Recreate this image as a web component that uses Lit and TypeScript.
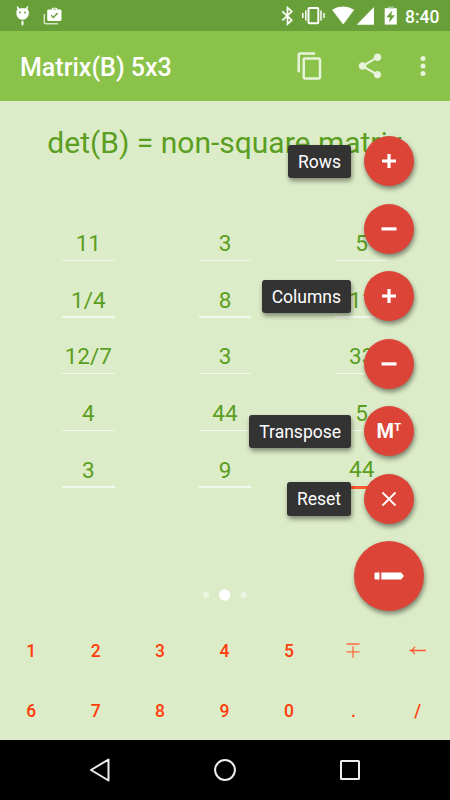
import { LitElement, html, css, svg } from "lit";
import { customElement } from "lit/decorators.js";
import { classMap } from "lit/directives/class-map.js";

const MATRIX = [
  ["11", "3", "5"],
  ["1/4", "8", "11"],
  ["12/7", "3", "33"],
  ["4", "44", "5"],
  ["3", "9", "44"],
];

const KEYS = ["1", "2", "3", "4", "5", "∓", "←", "6", "7", "8", "9", "0", ".", "/"];

const plus = html`<svg width="14" height="14" viewBox="0 0 14 14"><path fill="#fff" d="M5.400 0h3.200v5.400H14v3H8.600V14H5.400V8.400H0v-3h5.400z"/></svg>`;
const minus = html`<svg width="16" height="4" viewBox="0 0 16 4"><path fill="#fff" d="M.5.300h15v3.200H.5z"/></svg>`;
const cross = html`<svg width="16" height="16" viewBox="0 0 16 16"><path stroke="#fff" stroke-width="1.800" d="M1.500 1.500l13 13M14.500 1.500l-13 13"/></svg>`;
const transpose = html`<span class="mt">M<span class="t">T</span></span>`;

const ACTIONS = [
  { label: "Rows", icon: plus },
  { label: "", icon: minus },
  { label: "Columns", icon: plus },
  { label: "", icon: minus },
  { label: "Transpose", icon: transpose },
  { label: "Reset", icon: cross },
];

@customElement("app-root")
export class AppRoot extends LitElement {
  static styles = css`
    :host {
      display: flex;
      flex-direction: column;
      position: relative;
      width: 450px;
      height: 800px;
      overflow: hidden;
      background: #ddecc8;
      font-family: Roboto, "Noto Sans", sans-serif;
    }
    svg { display: block; flex: none; }
    .status {
      height: 31px;
      flex: none;
      background: #689f38;
    }
    .bar {
      height: 70px;
      flex: none;
      display: flex;
      align-items: center;
      background: #8bc34a;
      color: #fff;
      padding-left: 20px;
    }
    .title {
      flex: 1;
      font-size: 25px;
      font-weight: 500;
      line-height: 30px;
      padding-top: 4px;
    }
    .action {
      width: 60px;
      display: flex;
      justify-content: center;
    }
    .action.more { width: 45px; margin-right: 5px; }
    .action svg { fill: #e7f3db; }
    .det {
      flex: none;
      height: 84px;
      line-height: 84px;
      text-align: center;
      font-size: 30px;
      color: #5a9e22;
      white-space: nowrap;
    }
    .matrix {
      display: grid;
      grid-template-columns: repeat(3, 136.700px);
      grid-auto-rows: 56.670px;
      justify-content: center;
      padding-top: 19.300px;
      height: 284.200px;
      flex: none;
    }
    .cell {
      display: flex;
      flex-direction: column;
      justify-content: flex-end;
      align-items: center;
    }
    .value {
      font-size: 22.500px;
      line-height: 27px;
      color: #5a9e22;
      padding-bottom: 2.700px;
    }
    .rule { width: 52.500px; height: 1.400px; background: #f2f8ec; }
    .focus .rule { height: 2.500px; background: #ff5a30; margin-bottom: -1px; }
    .dots {
      flex: 1;
      display: flex;
      justify-content: center;
      align-items: flex-end;
      padding-bottom: 19px;
    }
    .pad {
      flex: none;
      display: grid;
      grid-template-columns: repeat(7, 1fr);
      grid-auto-rows: 60px;
      margin-left: -1px;
    }
    .key {
      display: flex;
      align-items: center;
      justify-content: center;
      font-size: 17.500px;
      font-weight: 500;
      color: #ff3d0a;
      padding-top: 1px;
    }
    .nav {
      height: 60px;
      flex: none;
      background: #000;
      display: flex;
      justify-content: center;
    }
    .navkey {
      width: 125px;
      display: flex;
      align-items: center;
      justify-content: center;
    }
    .menu {
      position: absolute;
      right: 26.300px;
      top: 136.300px;
      display: flex;
      flex-direction: column;
      align-items: flex-end;
    }
    .row {
      height: 50px;
      margin-bottom: 17.500px;
      padding-right: 10px;
      display: flex;
      align-items: center;
      gap: 12.700px;
    }
    .label {
      height: 33.500px;
      line-height: 34.500px;
      padding: 0 10px;
      border-radius: 3px;
      background: #333;
      color: #fff;
      font-size: 17.500px;
      box-shadow: 1px 3px 5px rgba(0, 0, 0, 0.42);
    }
    .fab {
      width: 50px;
      height: 50px;
      border-radius: 50%;
      background: #db4437;
      display: flex;
      align-items: center;
      justify-content: center;
      box-shadow: 1px 3px 5px rgba(0, 0, 0, 0.45);
    }
    .fab.big { width: 70px; height: 70px; }
    .mt {
      display: flex;
      color: #fff;
      font-size: 20px;
      line-height: 24px;
      font-weight: 700;
    }
    .t { font-size: 11.500px; line-height: 14px; padding-top: 1px; }
  `;

  private statusIcons() {
    return svg`
      <g fill="#fff">
        <path d="M16.300 12.500c0-3 2.600-4.300 6.200-4.300s6.400 1.300 6.400 4.300c0 4.300-2.900 7.300-6.400 7.300s-6.200-3-6.200-7.300z"/>
        <path d="M17 6.800l1 0 1.300 2.400-1.300.8zM28 6.800l-1 0-1.300 2.400 1.300.8z" stroke="#fff" stroke-width=".6"/>
        <rect x="21.500" y="20.800" width="2" height="4.700" rx="1"/>
        <g fill="#689f38"><circle cx="20" cy="12.500" r=".9"/><circle cx="25" cy="12.500" r=".9"/></g>
        <path d="M48.600 9.500h3.200V9q0-1.200 1.200-1.200h3.200q1.200 0 1.200 1.200v.5h2.700q1.400 0 1.400 1.400v8.700q0 1.400-1.400 1.400H48.600q-1.400 0-1.400-1.400v-8.700q0-1.400 1.400-1.400zM53 9.500h3.200v-.7H53z"/>
      </g>
      <path d="M51.200 15.300l2.200 2.200 4.200-4.500" fill="none" stroke="#689f38" stroke-width="1.500"/>
      <path d="M44.300 14v8.500q0 1.300 1.300 1.300H58" fill="none" stroke="#d3e4c4" stroke-width="1.500"/>
      <path d="M282.300 11.300l9.500 8.900-4.300 3.800V7.600l4.300 3.900-9.500 8.900" fill="none" stroke="#fff" stroke-width="1.700"/>
      <rect x="308.500" y="8" width="9.800" height="15.200" rx=".8" fill="none" stroke="#fff" stroke-width="1.900"/>
      <path d="M305.800 10.500v10M302.800 13v5M321 10.500v10M324 13v5" stroke="#fff" stroke-width="1.500"/>
      <g fill="#fff">
        <path d="M332 9.700Q343 3.500 354.200 9.700L343.200 24.600z"/>
        <path d="M374 7v17.800h-17.300z"/>
        <path d="M384.700 8.200h12.100v16.400h-12.100z"/>
      </g>
      <path d="M388 6.500h6v1.700h-6z" fill="#a7c78a"/>
      <path d="M391.800 11.300l-5 5.800h3.400l-.7 4.700 4.900-6.200H391z" fill="#689f38" stroke="#689f38" stroke-width=".5"/>
      <text x="405" y="22.500" font-size="17.500" font-weight="500" font-family="Roboto, sans-serif" fill="#fff">8:40</text>`;
  }

  render() {
    return html`
      <div class="status"><svg width="450" height="31" viewBox="0 0 450 31">${this.statusIcons()}</svg></div>
      <div class="bar">
        <div class="title">Matrix(B) 5x3</div>
        <div class="action"><svg width="30" height="30" viewBox="0 0 24 24"><path d="M16 1H4c-1.100 0-2 .9-2 2v14h2V3h12V1zm3 4H8c-1.100 0-2 .9-2 2v14c0 1.100.9 2 2 2h11c1.100 0 2-.9 2-2V7c0-1.100-.9-2-2-2zm0 16H8V7h11v14z"/></svg></div>
        <div class="action"><svg width="30" height="30" viewBox="0 0 24 24"><path d="M18 16.080c-.76 0-1.440.3-1.960.77L8.910 12.700c.05-.23.09-.46.09-.7s-.04-.47-.09-.7l7.050-4.110c.54.5 1.250.81 2.040.81 1.660 0 3-1.340 3-3s-1.340-3-3-3-3 1.340-3 3c0 .24.040.47.090.7L8.040 9.810C7.500 9.310 6.790 9 6 9c-1.660 0-3 1.340-3 3s1.340 3 3 3c.79 0 1.500-.31 2.040-.81l7.120 4.160c-.05.21-.08.43-.08.65 0 1.610 1.310 2.920 2.920 2.920s2.920-1.310 2.920-2.920-1.310-2.920-2.920-2.920z"/></svg></div>
        <div class="action more"><svg width="30" height="30" viewBox="0 0 24 24"><circle cx="12" cy="6" r="2"/><circle cx="12" cy="12" r="2"/><circle cx="12" cy="18" r="2"/></svg></div>
      </div>
      <div class="det">det(B) = non-square matrix</div>
      <div class="matrix">
        ${MATRIX.map((row, r) =>
          row.map(
            (v, c) => html`<div class=${classMap({ cell: true, focus: r === 4 && c === 2 })}>
              <div class="value">${v}</div>
              <div class="rule"></div>
            </div>`
          )
        )}
      </div>
      <div class="dots">
        <svg width="46" height="12" viewBox="0 0 46 12">
          <circle cx="4.300" cy="6" r="3.200" fill="#ebf4df"/>
          <circle cx="22.700" cy="6" r="5.700" fill="#fff"/>
          <circle cx="41.500" cy="6" r="3.200" fill="#ebf4df"/>
        </svg>
      </div>
      <div class="pad">${KEYS.map((k) => html`<div class="key">${this.keyFace(k)}</div>`)}</div>
      <div class="nav">
        <div class="navkey"><svg width="24" height="26" viewBox="0 0 24 26"><path d="M20.500 2.500v21L3 13z" fill="none" stroke="#eee" stroke-width="2" stroke-linejoin="round"/></svg></div>
        <div class="navkey"><svg width="24" height="24" viewBox="0 0 24 24"><circle cx="12" cy="12" r="9.900" fill="none" stroke="#eee" stroke-width="2"/></svg></div>
        <div class="navkey"><svg width="24" height="24" viewBox="0 0 24 24"><rect x="3" y="3" width="18" height="18" rx=".5" fill="none" stroke="#eee" stroke-width="2"/></svg></div>
      </div>
      <div class="menu">
        ${ACTIONS.map(
          (a) => html`<div class="row">
            ${a.label ? html`<div class="label">${a.label}</div>` : null}
            <div class="fab">${a.icon}</div>
          </div>`
        )}
        <div class="fab big">
          <svg width="32" height="10" viewBox="0 0 32 10"><path fill="#fff" d="M2.500 1.500H6.500v7H2.500q-1 0-1-1v-5q0-1 1-1zM8.300 1.500H28L31 5l-3 3.500H8.300z"/></svg>
        </div>
      </div>
    `;
  }

  private keyFace(k: string) {
    if (k === "∓")
      return html`<svg width="16" height="18" viewBox="0 0 16 18" aria-label="∓"><path d="M1.500 2h13M1.500 9.800h13M8 4.300v11.500" fill="none" stroke="#ff6a42" stroke-width="1.300"/></svg>`;
    if (k === "←")
      return html`<svg width="18" height="12" viewBox="0 0 18 12" aria-label="←"><path d="M17 5.500H1.500M6 1.700Q4.500 4.500 1.500 5.500q3 1 4.500 3.800" fill="none" stroke="#ff5a30" stroke-width="1.300"/></svg>`;
    return k;
  }
}
